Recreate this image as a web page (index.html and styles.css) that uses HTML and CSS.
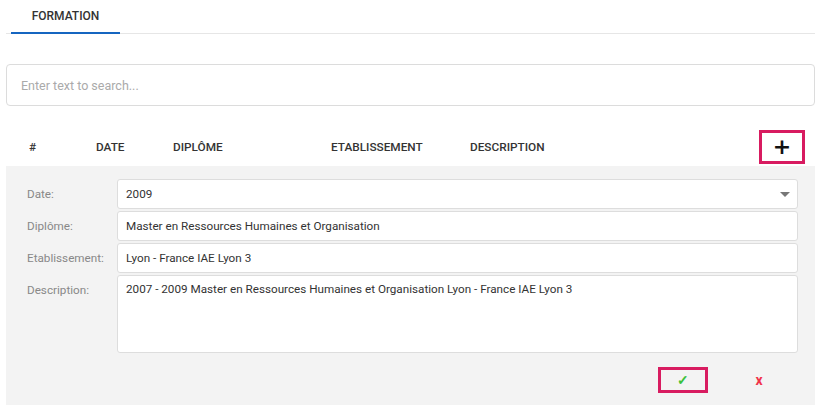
FILE: index.html
```html
<!DOCTYPE html>
<html lang="fr">
<head>
    <meta charset="UTF-8">
    <title>Formation</title>
    <link rel="stylesheet" href="styles.css">
</head>
<body>
    <div class="page">
        <div class="tabs">
            <div class="tab active">FORMATION</div>
        </div>

        <input class="search" type="text" placeholder="Enter text to search...">

        <div class="table-head">
            <span>#</span>
            <span>DATE</span>
            <span>DIPLÔME</span>
            <span>ETABLISSEMENT</span>
            <span>DESCRIPTION</span>
            <span></span>
            <button class="add-button">+</button>
        </div>

        <div class="edit-panel">
            <div class="form-row">
                <label>Date:</label>
                <div class="field select-field">2009<span class="caret"></span></div>
            </div>
            <div class="form-row">
                <label>Diplôme:</label>
                <div class="field">Master en Ressources Humaines et Organisation</div>
            </div>
            <div class="form-row">
                <label>Etablissement:</label>
                <div class="field">Lyon - France IAE Lyon 3</div>
            </div>
            <div class="form-row">
                <label>Description:</label>
                <div class="field textarea">2007 - 2009 Master en Ressources Humaines et Organisation Lyon - France IAE Lyon 3</div>
            </div>

            <div class="actions">
                <button class="action-button save">&#10003;</button>
                <button class="action-button cancel">x</button>
            </div>
        </div>
    </div>
</body>
</html>
```

FILE: styles.css
```css
body {
    margin: 0;
    background-color: #ffffff;
    font-family: Roboto, "Liberation Sans", sans-serif;
    color: #333333;
}

.page {
    padding: 0 1px 0 6px;
}

.tabs {
    display: flex;
    border-bottom: 1px solid #e6e6e6;
}

.tab {
    margin-left: 5px;
    width: 109px;
    height: 34px;
    box-sizing: border-box;
    text-align: center;
    font-size: 12px;
    font-weight: 500;
    line-height: 32px;
    color: #333333;
}

.tab.active {
    border-bottom: 2px solid #1565c0;
    margin-bottom: -1px;
}

.search {
    display: block;
    width: 100%;
    box-sizing: border-box;
    margin-top: 30px;
    height: 42px;
    padding: 0 14px;
    border: 1px solid #dcdcdc;
    border-radius: 4px;
    font-family: Roboto, "Liberation Sans", sans-serif;
    font-size: 12.5px;
    outline: none;
}

.search::placeholder {
    color: #aaaaaa;
}

.table-head {
    display: grid;
    grid-template-columns: 67px 77px 158px 139px 1fr 0 46px;
    align-items: center;
    margin-top: 24px;
    padding: 0 10px 0 23px;
    height: 34px;
    font-size: 11.8px;
    font-weight: 500;
    color: #333333;
}

.add-button {
    width: 46px;
    height: 34px;
    box-sizing: border-box;
    border: 3px solid #d81b60;
    background: #ffffff;
    font-size: 22px;
    font-weight: 700;
    line-height: 24px;
    padding: 0;
    color: #111111;
    font-family: "DejaVu Sans", sans-serif;
}

.edit-panel {
    margin-top: 2px;
    background-color: #f3f3f3;
    padding: 13px 17px 20px 21px;
}

.form-row {
    display: flex;
    align-items: flex-start;
    margin-bottom: 2px;
}

.form-row label {
    width: 90px;
    flex-shrink: 0;
    font-size: 11.7px;
    color: #888888;
    line-height: 30px;
}

.field {
    flex-grow: 1;
    position: relative;
    height: 30px;
    box-sizing: border-box;
    padding: 0 8px;
    background: #ffffff;
    border: 1px solid #dddddd;
    border-radius: 3px;
    font-size: 11.7px;
    line-height: 28px;
    color: #333333;
}

.field.textarea {
    height: 78px;
    line-height: 26px;
}

.caret {
    position: absolute;
    right: 7px;
    top: 12px;
    border-left: 5px solid transparent;
    border-right: 5px solid transparent;
    border-top: 5px solid #777777;
}

.actions {
    display: flex;
    justify-content: flex-end;
    gap: 26px;
    margin-top: 14px;
    padding-right: 14px;
}

.action-button {
    width: 50px;
    height: 26px;
    box-sizing: border-box;
    background: transparent;
    border: 3px solid transparent;
    font-family: Roboto, "Liberation Sans", sans-serif;
    font-size: 14px;
    font-weight: 700;
    padding: 0;
}

.action-button.save {
    border-color: #d81b60;
    color: #3cc13c;
}

.action-button.cancel {
    color: #f0344a;
}
```
